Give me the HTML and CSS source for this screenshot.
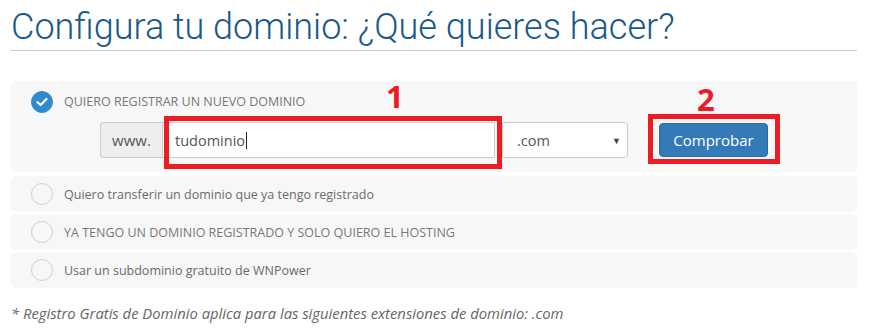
FILE: index.html
```html
<!DOCTYPE html>
<html lang="es">

<head>
  <meta charset="utf-8">
  <title>Configura tu dominio</title>
  <link rel="stylesheet" href="styles.css">
</head>

<body>
  <div class="page">
    <h1 class="title">Configura tu dominio: ¿Qué quieres hacer?</h1>

    <div class="options">
      <div class="option option-open">
        <div class="option-head">
          <span class="radio radio-checked">
            <svg width="12" height="10" viewBox="0 0 12 10"><path d="M1.5 5.2 L4.6 8 L10.5 2" fill="none" stroke="#fff" stroke-width="2.2" stroke-linecap="round" stroke-linejoin="round"/></svg>
          </span>
          <span class="option-label upper">Quiero registrar un nuevo dominio</span>
        </div>
        <div class="domain-row">
          <span class="addon">www.</span>
          <span class="domain-input">tudominio<span class="caret"></span></span>
          <span class="domain-select">.com<span class="arrow">▼</span></span>
          <button class="btn-check">Comprobar</button>
        </div>
        <span class="mark mark-1"></span>
        <span class="mark mark-2"></span>
        <span class="num num-1">1</span>
        <span class="num num-2">2</span>
      </div>

      <div class="option">
        <div class="option-head">
          <span class="radio"></span>
          <span class="option-label">Quiero transferir un dominio que ya tengo registrado</span>
        </div>
      </div>

      <div class="option">
        <div class="option-head">
          <span class="radio"></span>
          <span class="option-label upper">Ya tengo un dominio registrado y solo quiero el hosting</span>
        </div>
      </div>

      <div class="option">
        <div class="option-head">
          <span class="radio"></span>
          <span class="option-label">Usar un subdominio gratuito de WNPower</span>
        </div>
      </div>
    </div>

    <p class="note">* Registro Gratis de Dominio aplica para las siguientes extensiones de dominio: .com</p>
  </div>
</body>

</html>
```

FILE: styles.css
```css
body {
  margin: 0;
  background: #fff;
  font-family: 'Open Sans', sans-serif;
  color: #666;
}

.page {
  width: 846px;
  padding-left: 11px;
}

.title {
  margin: 0;
  padding-top: 5px;
  height: 45px;
  font-family: Roboto, sans-serif;
  font-weight: 300;
  font-size: 36px;
  line-height: 44px;
  color: #1a5987;
  border-bottom: 1px solid #c8c8c8;
}

.options {
  margin-top: 30px;
  display: flex;
  flex-direction: column;
  gap: 2px;
}

.option {
  position: relative;
  background: #f7f7f7;
  border-radius: 5px;
  height: 36px;
}

.option-open {
  height: 91px;
  margin-bottom: 2px;
}

.option-head {
  display: flex;
  align-items: center;
  height: 36px;
  padding-left: 20px;
  gap: 11px;
}

.option-open .option-head {
  height: 21px;
  padding-top: 10px;
}

.radio {
  box-sizing: border-box;
  width: 22px;
  height: 22px;
  border-radius: 50%;
  border: 1px solid #d2d0cc;
  background: #f7f7f7;
  display: flex;
  align-items: center;
  justify-content: center;
}

.radio-checked {
  background: #2f8ad0;
  border-color: #2f8ad0;
}

.option-label {
  font-size: 12.5px;
  color: #6a6a6a;
}

.option-label.upper {
  text-transform: uppercase;
  font-size: 12.5px;
  color: #777;
}

.domain-row {
  display: flex;
  align-items: center;
  margin-top: 10px;
  padding-left: 89px;
  height: 36px;
}

.addon {
  box-sizing: border-box;
  width: 62px;
  height: 36px;
  background: #eee;
  border: 1px solid #ccc;
  border-right: none;
  border-radius: 4px 0 0 4px;
  display: flex;
  align-items: center;
  justify-content: center;
  font-size: 15px;
  color: #555;
}

.domain-input {
  box-sizing: border-box;
  width: 333px;
  height: 36px;
  background: #fff;
  border: 1px solid #ccc;
  display: flex;
  align-items: center;
  padding-left: 12px;
  font-size: 14.5px;
  color: #555;
}

.caret {
  width: 1px;
  height: 17px;
  background: #222;
  margin-left: 1px;
}

.domain-select {
  box-sizing: border-box;
  width: 126px;
  height: 36px;
  margin-left: 7px;
  background: #fff;
  border: 1px solid #ccc;
  border-radius: 0 4px 4px 0;
  display: flex;
  align-items: center;
  justify-content: space-between;
  padding: 0 6px 0 14px;
  font-size: 14.5px;
  color: #555;
}

.arrow {
  font-size: 9px;
  color: #444;
}

.btn-check {
  margin-left: 31px;
  width: 109px;
  height: 34px;
  background: #337ab7;
  border: 1px solid #2e6da4;
  border-radius: 4px;
  color: #fff;
  font-family: 'Open Sans', sans-serif;
  font-size: 15px;
  padding: 0;
}

.mark {
  position: absolute;
  box-sizing: border-box;
  border: 5px solid #ed1c24;
}

.mark-1 {
  left: 153px;
  top: 35px;
  width: 338px;
  height: 53px;
}

.mark-2 {
  left: 637px;
  top: 33px;
  width: 132px;
  height: 50px;
}

.num {
  position: absolute;
  font-family: 'Open Sans', sans-serif;
  font-weight: 700;
  font-size: 31px;
  line-height: 30px;
  color: #ed1c24;
}

.num-1 {
  left: 375px;
  top: 0;
}

.num-2 {
  left: 686px;
  top: 3px;
}

.note {
  margin: 15px 0 0 0;
  font-style: italic;
  font-size: 14.8px;
  color: #666;
}
```
